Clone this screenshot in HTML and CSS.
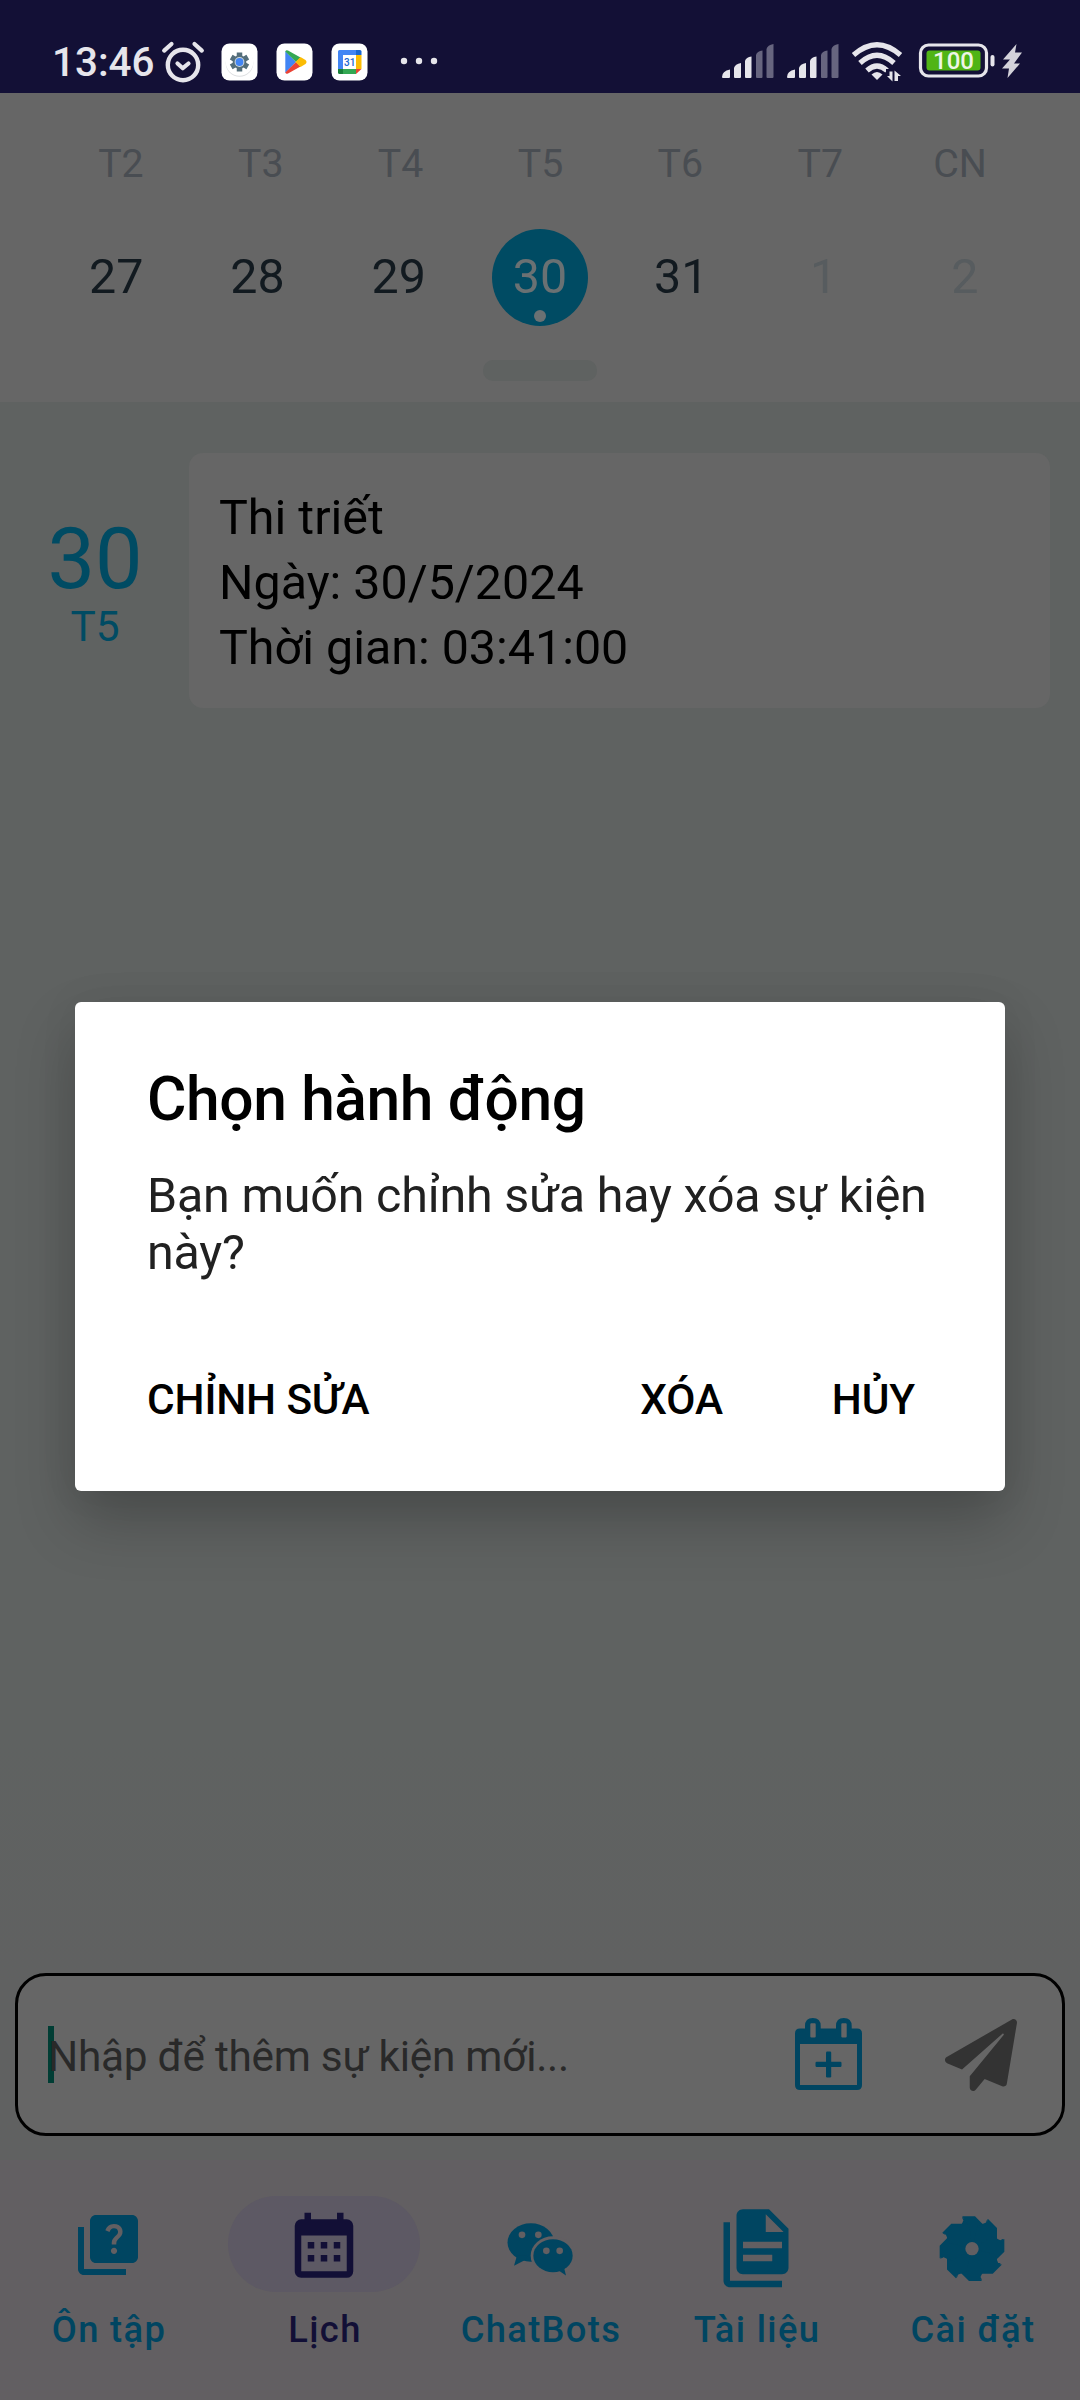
FILE: index.html
```html
<!DOCTYPE html>
<html lang="vi">
<head>
<meta charset="utf-8">
<title>Lịch</title>
<link rel="stylesheet" href="styles.css">
</head>
<body>
<div class="screen">
  <header class="status">
    <span class="clock">13:46</span>
    <svg class="alarm" width="44" height="44" viewBox="0 0 44 44" fill="none" stroke="#e6e5eb" stroke-linecap="round">
      <circle cx="22" cy="24" r="15.2" stroke-width="4.4"/>
      <path d="M3.200 9.600L10.500 3M40.800 9.600L33.500 3" stroke-width="4.200"/>
      <path d="M16.500 22.500L21.800 27.200L27.500 22.500" stroke-width="4.200" stroke-linejoin="round"/>
    </svg>
    <svg class="app" width="37" height="38" viewBox="0 0 37 38">
      <rect x=".5" y=".5" width="36" height="37" rx="8" fill="#fff"/>
      <circle cx="18.500" cy="20" r="13.800" fill="#dcdee0"/>
      <circle cx="18.500" cy="19" r="13.800" fill="#fff"/>
      <g stroke="#546e7a" stroke-width="5.500"><path d="M18.500 9.500V28.500M10.200 14.200L26.800 23.800M10.200 23.800L26.800 14.200"/></g>
      <circle cx="18.500" cy="19" r="6.800" fill="#546e7a"/>
      <circle cx="18.500" cy="19" r="4.900" fill="#cfd8dc"/>
      <circle cx="18.500" cy="19" r="3.900" fill="#4285f4"/>
    </svg>
    <svg class="app" width="37" height="38" viewBox="0 0 37 38">
      <rect x=".5" y=".5" width="36" height="37" rx="8" fill="#fff"/>
      <path d="M9.300 8V30L20 19Z" fill="#4285f4"/>
      <path d="M9.300 8.500Q10 6.500 12 7.500L24.500 14.500L20 19Z" fill="#34a853"/>
      <path d="M9.300 29.500Q10 31.500 12 30.500L24.500 23.500L20 19Z" fill="#ea4335"/>
      <path d="M24.500 14L29.500 17Q31.500 19 29.500 21L24.500 24L19.500 19Z" fill="#fbbc04"/>
    </svg>
    <svg class="app" width="37" height="38" viewBox="0 0 37 38">
      <rect x=".5" y=".5" width="36" height="37" rx="8" fill="#fff"/>
      <path d="M7 8.500Q7 7 8.500 7H25V12H12V26H7Z" fill="#4285f4"/>
      <path d="M25 7H29Q30.500 7 30.500 8.500V12H25Z" fill="#1967d2"/>
      <path d="M25 12H30.500V26H25Z" fill="#fbbc04"/>
      <path d="M12 26H25V31H12Z" fill="#34a853"/>
      <path d="M7 26H12V31H8.500Q7 31 7 29.500Z" fill="#188038"/>
      <path d="M25 26H30.500L25 31Z" fill="#ea4335"/>
      <text x="18.700" y="22.700" text-anchor="middle" font-size="10" font-weight="500" fill="#1967d2">31</text>
    </svg>
    <svg class="more" width="38" height="8" viewBox="0 0 38 8" fill="#e6e5eb"><circle cx="4" cy="4" r="3.200"/><circle cx="19" cy="4" r="3.200"/><circle cx="34" cy="4" r="3.200"/></svg>
    <span class="spacer"></span>
    <svg class="signal" width="52" height="36" viewBox="0 0 52 36" fill="#e6e5eb">
      <path d="M0 33Q0 27 8 25.500V33Q8 34 7 34H1Q0 34 0 33ZM12 24Q13 20 19 19V33Q19 34 18 34H13Q12 34 12 33ZM23 17Q24 13 29.500 12.500V33Q29.500 34 28.500 34H24Q23 34 23 33Z"/>
      <path fill="#67657f" d="M34 11Q35 7 40.500 6.500V33Q40.500 34 39.500 34H35Q34 34 34 33ZM44.500 5Q45.500 1 51.500 0V33Q51.500 34 50.500 34H45.500Q44.500 34 44.500 33Z"/>
    </svg>
    <svg class="signal" width="52" height="36" viewBox="0 0 52 36" fill="#e6e5eb">
      <path d="M0 33Q0 27 8 25.500V33Q8 34 7 34H1Q0 34 0 33ZM12 24Q13 20 19 19V33Q19 34 18 34H13Q12 34 12 33ZM23 17Q24 13 29.500 12.500V33Q29.500 34 28.500 34H24Q23 34 23 33Z"/>
      <path fill="#67657f" d="M34 11Q35 7 40.500 6.500V33Q40.500 34 39.500 34H35Q34 34 34 33ZM44.500 5Q45.500 1 51.500 0V33Q51.500 34 50.500 34H45.500Q44.500 34 44.500 33Z"/>
    </svg>
    <svg class="wifi" width="50" height="40" viewBox="0 0 50 40" fill="none" stroke="#e6e5eb" stroke-width="5.200">
      <path d="M1.500 13Q25 -7.500 48.500 13M8 21Q25 5.500 42 21M15 28.500Q25 19.500 35 28.500"/>
      <path d="M25 38L19.500 32.500Q25 27.500 30.500 32.500Z" fill="#e6e5eb" stroke="none"/>
      <path d="M34 27H43V40H34Z" fill="#131036" stroke="none"/>
      <path d="M35 34L40.500 39.500V29.500H37.500V34ZM42.500 39V28.500L49 34H46V39Z" fill="#e6e5eb" stroke="none"/>
    </svg>
    <svg class="battery" width="76" height="36" viewBox="0 0 76 36">
      <rect x="1.500" y="2" width="66" height="31" rx="8" fill="none" stroke="#e6e5eb" stroke-width="3.200"/>
      <rect x="7.500" y="7.500" width="54" height="20" rx="3" fill="#50b415"/>
      <rect x="71.500" y="12" width="4" height="11.500" rx="2" fill="#e6e5eb"/>
      <text x="34.500" y="26.200" text-anchor="middle" font-size="24" font-weight="500" fill="#eef5e6">100</text>
    </svg>
    <svg class="bolt" width="20" height="34" viewBox="0 0 20 34"><path d="M14.500 0L1 15.500H8L0 24.500H7L5.500 34L18 19.500H12L20 8.500H13Z" fill="#d3d2da"/></svg>
  </header>

  <section class="week">
    <div class="weekdays"><span>T2</span><span>T3</span><span>T4</span><span>T5</span><span>T6</span><span>T7</span><span>CN</span></div>
    <div class="dates">
      <span>27</span><span>28</span><span>29</span><span class="today">30<i class="dot"></i></span><span>31</span><span class="off">1</span><span class="off">2</span>
    </div>
    <div class="knob"></div>
  </section>

  <main class="agenda">
    <div class="event">
      <div class="day"><span class="num">30</span><span class="name">T5</span></div>
      <div class="card"><p>Thi triết</p><p>Ngày: 30/5/2024</p><p>Thời gian: 03:41:00</p></div>
    </div>
  </main>

  <div class="composer">
    <i class="caret"></i>
    <span class="placeholder">Nhập để thêm sự kiện mới...</span>
    <svg class="add" width="67" height="73" viewBox="0 0 67 73">
      <path fill="#004561" fill-rule="evenodd" d="M5 10.500H10V8Q10 0 17.800 0Q25.700 0 25.700 8V10.500H41V8Q41 0 48.800 0Q56.700 0 56.700 8V10.500H62Q67 10.500 67 15.500V67Q67 72 62 72H5Q0 72 0 67V15.500Q0 10.500 5 10.500ZM5 26V67H62V26ZM16.300 5.200Q15.300 5.200 15.300 6.200V18.500Q15.300 19.500 16.300 19.500H19.700Q20.700 19.500 20.700 18.500V6.200Q20.700 5.200 19.700 5.200ZM47.300 5.200Q46.300 5.200 46.300 6.200V18.500Q46.300 19.500 47.300 19.500H50.700Q51.700 19.500 51.700 18.500V6.200Q51.700 5.200 50.700 5.200Z"/>
      <rect x="20.500" y="43.800" width="26" height="5.200" rx="1.200" fill="#004561"/><rect x="31" y="33.500" width="5.200" height="26" rx="1.200" fill="#004561"/>
    </svg>
    <svg class="send" width="72" height="72" viewBox="0 0 512 512" fill="#333"><path d="M476 3.200L12.500 270.600c-18.100 10.400-15.800 35.600 2.200 43.200L121 358.400l287.300-253.200c5.500-4.900 13.300 2.600 8.600 8.300L176 407v80.500c0 23.600 28.500 32.900 42.500 15.800L282 426l124.600 52.200c14.200 6 30.400-2.900 33-18.200l72-432C515 7.800 493.300-6.800 476 3.200z"/></svg>
  </div>

  <nav class="tabs">
    <a class="tab"><span class="pill"><svg width="72" height="72" viewBox="0 -.33 24 24"><path d="M4 6H2v14c0 1.100.9 2 2 2h14v-2H4V6z"/><path d="M20 2H8c-1.100 0-2 .9-2 2v12c0 1.100.9 2 2 2h12c1.100 0 2-.9 2-2V4c0-1.100-.9-2-2-2zm-5.990 13c-.59 0-1.050-.47-1.050-1.050 0-.59.47-1.040 1.050-1.040.59 0 1.040.45 1.040 1.040-.01.58-.45 1.050-1.040 1.050zm2.500-6.170c-.63.93-1.230 1.210-1.560 1.810-.13.24-.18.4-.18 1.180h-1.520c0-.41-.06-1.080.26-1.650.41-.73 1.180-1.160 1.630-1.800.48-.68.21-1.940-1.140-1.940-.88 0-1.320.67-1.500 1.230l-1.370-.57C11.510 5.960 12.520 5 13.990 5c1.230 0 2.080.56 2.510 1.260.37.61.58 1.730.01 2.570z"/></svg></span><span class="label">Ôn tập</span></a>
    <a class="tab active"><span class="pill"><svg width="78" height="78" viewBox="0 -1.400 24 24"><path d="M9 10V12H7V10H9M13 10V12H11V10H13M17 10V12H15V10H17M19 3A2 2 0 0 1 21 5V19A2 2 0 0 1 19 21H5C3.890 21 3 20.100 3 19V5A2 2 0 0 1 5 3H6V1H8V3H16V1H18V3H19M19 19V8H5V19H19M9 14V16H7V14H9M13 14V16H11V14H13M17 14V16H15V14H17Z"/></svg></span><span class="label">Lịch</span></a>
    <a class="tab"><span class="pill"><svg width="90" height="85" viewBox="0 -10.500 270 255">
      <ellipse cx="107.500" cy="111" rx="70" ry="57.500"/><path d="M66 150L57 181L86 166L100 150Z"/>
      <ellipse class="gap" cx="174" cy="150.500" rx="67" ry="58"/>
      <ellipse cx="174" cy="150.500" rx="59" ry="49.500"/><path d="M190 194L213 210L207 186Z"/>
      <g class="gap"><circle cx="81" cy="88" r="10"/><circle cx="130" cy="88" r="10"/><circle cx="154" cy="136" r="10"/><circle cx="194" cy="136" r="10"/></g>
    </svg></span><span class="label">ChatBots</span></a>
    <a class="tab"><span class="pill"><svg width="78" height="78" viewBox="0 -1.320 24 24"><path fill-rule="evenodd" d="M15 7H20.500L15 1.500V7M8 0H16L22 6V18C22 19.110 21.110 20 20 20H8C6.890 20 6 19.100 6 18V2C6 .89 6.890 0 8 0M4 4V22H20V24H4C2.900 24 2 23.100 2 22V4H4M20 12V10H8V12H20M17 16V14H8V16H17Z"/></svg></span><span class="label">Tài liệu</span></a>
    <a class="tab"><span class="pill"><svg width="66" height="66" viewBox="-99 -113 198 198">
      <defs><path id="tooth" d="M-29 -97H9L31 -75C36 -73 42 -73 43 -77C42 -82 44 -86 48 -89L40 -50L0 0L-36 -60L-27 -82C-24 -86 -25 -92 -29 -97Z"/></defs>
      <circle r="74"/>
      <use href="#tooth"/><use href="#tooth" transform="rotate(45)"/><use href="#tooth" transform="rotate(90)"/><use href="#tooth" transform="rotate(135)"/><use href="#tooth" transform="rotate(180)"/><use href="#tooth" transform="rotate(225)"/><use href="#tooth" transform="rotate(270)"/><use href="#tooth" transform="rotate(315)"/>
      <circle class="gap" r="20"/>
    </svg></span><span class="label">Cài đặt</span></a>
  </nav>

  <div class="dialog" role="dialog">
    <h1>Chọn hành động</h1>
    <p>Bạn muốn chỉnh sửa hay xóa sự kiện này?</p>
    <div class="actions"><button>CHỈNH SỬA</button><button class="delete">XÓA</button><button>HỦY</button></div>
  </div>
</div>
</body>
</html>
```
FILE: styles.css
```css
* { box-sizing: border-box; }
body { margin: 0; font-family: Roboto, "Noto Sans", sans-serif; }
p, h1 { margin: 0; }
svg { display: block; flex: none; overflow: visible; }

.screen {
  position: relative;
  display: flex;
  flex-direction: column;
  width: 1080px;
  height: 2400px;
  overflow: hidden;
  background: #606161;
}

.status {
  display: flex;
  align-items: flex-start;
  height: 93px;
  padding: 40px 58px 0 52px;
  background: #131036;
  color: #e6e5eb;
}
.clock { width: 109px; font-size: 40.4px; font-weight: 500; line-height: 45px; }
.alarm { margin-top: 1px; margin-right: 16px; }
.app { margin-top: 3px; margin-right: 18px; }
.more { margin-left: 14px; margin-top: 17px; }
.spacer { flex: 1; }
.signal { margin-top: 4px; margin-right: 13px; }
.wifi { margin-top: 2px; margin-right: 17px; }
.battery { margin-top: 3px; margin-right: 7px; }
.bolt { margin-top: 4px; }

.week {
  display: flex;
  flex-direction: column;
  align-items: center;
  height: 309px;
  padding-top: 48px;
  background: #666;
}
.weekdays, .dates { display: grid; grid-template-columns: repeat(7, 1fr); text-align: center; }
.weekdays { width: 980px; padding-left: 1px; font-size: 39.3px; line-height: 47px; color: #494d52; }
.dates { width: 989px; margin-top: 41px; font-size: 48.4px; line-height: 95px; color: #121a20; justify-items: center; }
.today { position: relative; width: 96px; height: 97px; border-radius: 50%; background: #004b63; }
.dates .today { color: #6a7173; }
.dot { position: absolute; left: 42px; bottom: 4px; width: 12px; height: 12px; border-radius: 50%; background: #6a7173; }
.dates .off { padding-left: 2px; color: #575c5f; }
.knob { width: 114px; height: 21px; margin-top: 34px; border-radius: 10px; background: #5f6261; }

.agenda { flex: 1; padding-top: 51px; background: linear-gradient(#5f6261, #5f6261 85%, #606161); }
.event { display: flex; }
.day { display: flex; flex-direction: column; align-items: center; width: 190px; margin-right: -1px; padding-top: 61px; color: #004b63; }
.num { font-size: 84.7px; line-height: 90px; }
.name { font-size: 42.35px; line-height: 46px; }
.card {
  width: 861px;
  height: 255px;
  padding: 32px 30px 0;
  border-radius: 14px;
  background: #666;
  color: #000;
  font-size: 48.4px;
  line-height: 65px;
}

.composer {
  position: relative;
  display: flex;
  align-items: center;
  height: 163px;
  margin: 0 15px 24px;
  padding: 0 45px 0 30px;
  border: 3px solid #000;
  border-radius: 31px;
  background: #666;
}
.caret { position: absolute; left: 30px; top: 50px; width: 6px; height: 57px; background: #003d34; }
.placeholder { position: relative; flex: 1; margin-top: 4px; font-size: 42.35px; line-height: 50px; letter-spacing: -.27px; color: #292929; }
.add { margin-right: 83px; }

.tabs { display: grid; grid-template-columns: repeat(5, 1fr); height: 240px; padding-top: 36px; background: #625f62; }
.tab {
  display: flex;
  flex-direction: column;
  align-items: center;
  gap: 15px;
  font-size: 36.3px;
  font-weight: 500;
  line-height: 46px;
  letter-spacing: 1.35px;
  color: #004561;
  white-space: nowrap;
}
.label { padding-left: 2px; }
.tab svg { fill: currentColor; }
.tab .gap { fill: #625f62; }
.pill { display: flex; align-items: center; justify-content: center; width: 192px; height: 96px; border-radius: 48px; }
.active { color: #120f36; }
.active .pill { background: #5d5964; }

.dialog {
  position: absolute;
  left: 75px;
  top: 1002px;
  width: 930px;
  height: 489px;
  padding: 63px 50px 0 72px;
  border-radius: 6px;
  background: #fff;
  box-shadow: 0 30px 60px rgba(0, 0, 0, .22), 0 0 40px rgba(0, 0, 0, .06);
}
.dialog h1 { font-size: 60.5px; font-weight: 500; line-height: 70px; letter-spacing: -.4px; }
.dialog p { margin-top: 33px; font-size: 48.4px; line-height: 56.7px; letter-spacing: -.18px; color: #212121; }
.actions { display: flex; align-items: center; margin-top: 91px; padding-right: 40px; }
.actions button { padding: 0; border: 0; background: none; font: 500 42.35px/56px Roboto, "Noto Sans", sans-serif; letter-spacing: -.15px; color: #000; }
.delete { margin-left: auto; margin-right: 109px; }
```
